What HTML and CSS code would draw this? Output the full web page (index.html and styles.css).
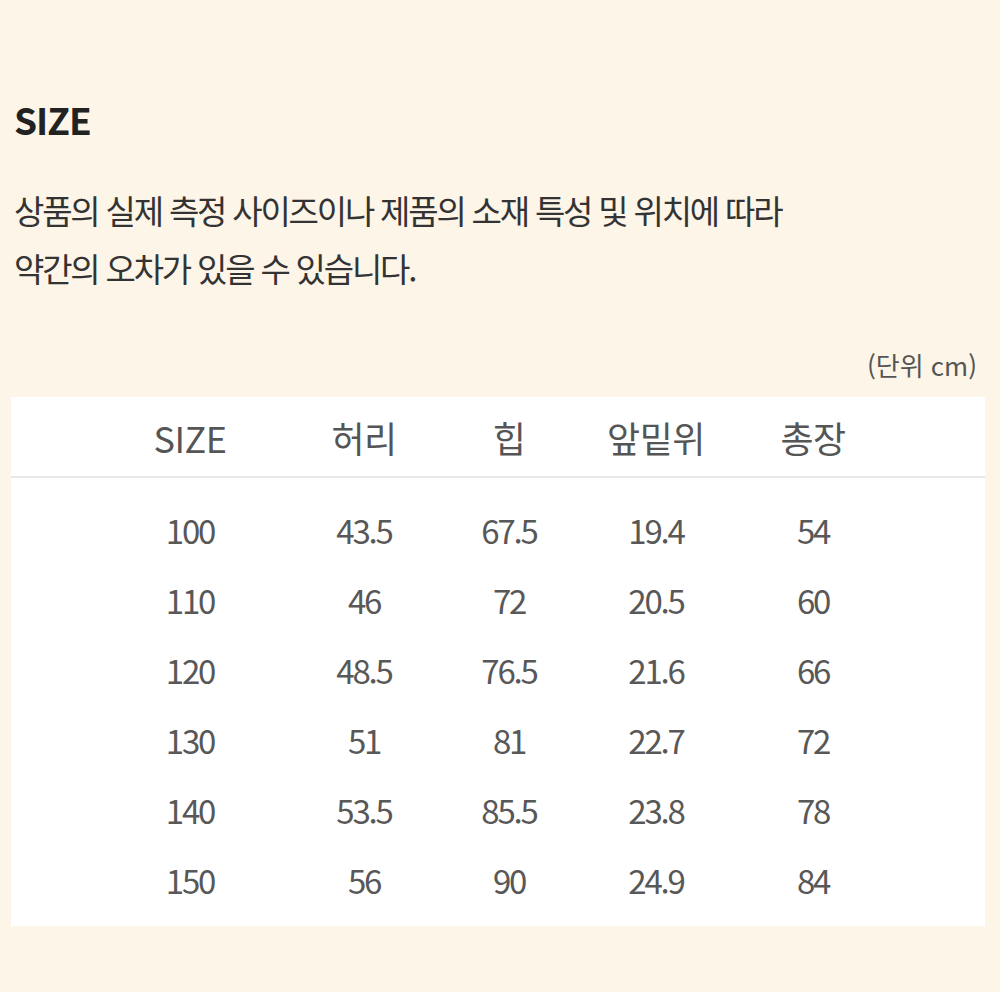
FILE: index.html
```html
<!DOCTYPE html>
<html lang="ko">
<head>
<meta charset="utf-8">
<title>SIZE</title>
<link rel="stylesheet" href="styles.css">
</head>
<body>
<div class="page">
  <h1 class="title">SIZE</h1>
  <p class="desc">상품의 실제 측정 사이즈이나 제품의 소재 특성 및 위치에 따라<br>약간의 오차가 있을 수 있습니다.</p>
  <div class="unit">(단위 cm)</div>
  <div class="table">
    <div class="row head">
      <span>SIZE</span><span>허리</span><span>힙</span><span>앞밑위</span><span>총장</span>
    </div>
    <div class="body">
      <div class="row"><span>100</span><span>43.5</span><span>67.5</span><span>19.4</span><span>54</span></div>
      <div class="row"><span>110</span><span>46</span><span>72</span><span>20.5</span><span>60</span></div>
      <div class="row"><span>120</span><span>48.5</span><span>76.5</span><span>21.6</span><span>66</span></div>
      <div class="row"><span>130</span><span>51</span><span>81</span><span>22.7</span><span>72</span></div>
      <div class="row"><span>140</span><span>53.5</span><span>85.5</span><span>23.8</span><span>78</span></div>
      <div class="row"><span>150</span><span>56</span><span>90</span><span>24.9</span><span>84</span></div>
    </div>
  </div>
</div>
</body>
</html>
```
FILE: styles.css
```css
html, body {
  margin: 0;
  padding: 0;
  background: #ffffff;
}
body {
  font-family: "Noto Sans CJK KR", "Noto Sans", sans-serif;
}
.page {
  background: #fdf5e8;
  height: 992px;
  padding: 99px 15px 0 11px;
  box-sizing: border-box;
}
.title {
  margin: 0 0 0 3px;
  font-size: 37px;
  line-height: 40px;
  font-weight: 700;
  color: #222;
  letter-spacing: -1px;
}
.desc {
  margin: 42px 0 0 3px;
  font-size: 33px;
  line-height: 58px;
  color: #333;
  letter-spacing: -2.2px;
}
.unit {
  margin-top: 53px;
  text-align: right;
  font-size: 26px;
  line-height: 30px;
  color: #555;
  padding-right: 8px;
}
.table {
  margin-top: 17px;
  background: #ffffff;
  height: 529px;
}
.row {
  display: grid;
  grid-template-columns: 174px 174px 116px 178px 136px;
  padding-left: 92px;
  align-items: center;
  text-align: center;
  height: 70px;
}
.row span {
  display: block;
  white-space: nowrap;
}
.head {
  height: 79px;
  border-bottom: 2px solid #e8e8e8;
  font-size: 36px;
  color: #555;
  letter-spacing: -0.5px;
}
.body {
  padding-top: 17px;
}
.body .row {
  font-size: 33px;
  color: #585858;
  letter-spacing: -2.2px;
}
```
